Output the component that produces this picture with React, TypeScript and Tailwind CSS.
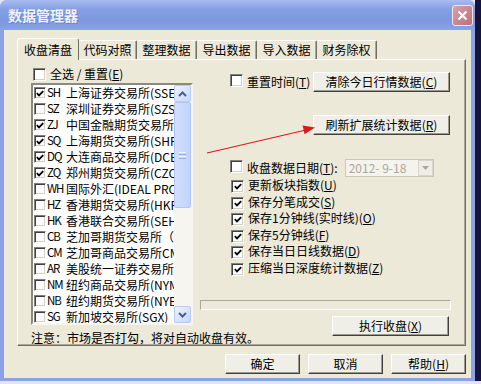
import React from 'react'

type BoxProps = { checked?: boolean; small?: boolean }

// classic sunken check box
function Box({ checked = false, small = false }: BoxProps) {
  return (
    <span
      className={
        (small ? 'w-[12px] h-[12px] ' : 'w-[13px] h-[13px] ') +
        'inline-flex shrink-0 items-center justify-center bg-white border border-t-[#808080] border-l-[#808080] border-b-white border-r-white shadow-[inset_1px_1px_0_#404040,inset_-1px_-1px_0_#d4d0c8]'
      }
    >
      {checked && (
        <svg width="8" height="7" viewBox="0 0 8 7">
          <path d="M0.8 3.2 L3 5.4 L7.2 1.2" fill="none" stroke="#000" strokeWidth="1.8" />
        </svg>
      )}
    </span>
  )
}

function Acc({ k }: { k: string }) {
  return (
    <>
      (<span className="underline">{k}</span>)
    </>
  )
}

function Btn({ children, className = '' }: { children: React.ReactNode; className?: string }) {
  return (
    <div
      className={
        'flex items-center justify-center bg-[#f0efe7] border border-t-white border-l-white border-r-[#404040] border-b-[#404040] shadow-[inset_-1px_-1px_0_#9d9a8c] text-[12px] leading-none text-black ' +
        className
      }
    >
      {children}
    </div>
  )
}

const markets: Array<[string, string, boolean]> = [
  ['SH', '上海证券交易所(SSE)', true],
  ['SZ', '深圳证券交易所(SZSE)', false],
  ['ZJ', '中国金融期货交易所(CFFEX)', true],
  ['SQ', '上海期货交易所(SHFE)', true],
  ['DQ', '大连商品交易所(DCE)', true],
  ['ZQ', '郑州期货交易所(CZCE)', true],
  ['WH', '国际外汇(IDEAL PRO)', false],
  ['HZ', '香港期货交易所(HKFE)', false],
  ['HK', '香港联合交易所(SEHK)', false],
  ['CB', '芝加哥期货交易所（CBOT)', false],
  ['CM', '芝加哥商品交易所CME', false],
  ['AR', '美股统一证券交易所', false],
  ['NM', '纽约商品交易所(NYMEX)', false],
  ['NB', '纽约期货交易所(NYBOT)', false],
  ['SG', '新加坡交易所(SGX)', false]
]

const options: Array<[string, string]> = [
  ['更新板块指数', 'U'],
  ['保存分笔成交', 'S'],
  ['保存1分钟线(实时线)', 'O'],
  ['保存5分钟线', 'F'],
  ['保存当日日线数据', 'D'],
  ['压缩当日深度统计数据', 'Z']
]

const tabs = ['代码对照', '整理数据', '导出数据', '导入数据', '财务除权']

function ScrollBtn({ up }: { up: boolean }) {
  return (
    <div className="h-[17px] w-[17px] flex items-center justify-center rounded-[2px] border border-[#b8cbf5] bg-[linear-gradient(135deg,#eef3fe,#c6d6fc)]">
      <svg width="9" height="6" viewBox="0 0 9 6">
        <path
          d={up ? 'M1 5 L4.5 1.5 L8 5' : 'M1 1 L4.5 4.5 L8 1'}
          fill="none"
          stroke="#4d6185"
          strokeWidth="2"
        />
      </svg>
    </div>
  )
}

export default function App() {
  return (
    <div className="relative w-[481px] h-[384px] overflow-hidden bg-[#e4e4ea] font-['Noto_Sans_CJK_SC',sans-serif] text-[12px] text-black">
      <div className="flex h-[381px]">
        {/* window */}
        <div className="w-[475px] flex flex-col rounded-t-[7px] bg-[#8ba3e6]">
          {/* title bar */}
          <div className="h-[30px] shrink-0 flex items-center pl-[8px] pr-[2px] rounded-t-[7px] bg-[linear-gradient(180deg,#a9bcf0_0%,#86a0e4_30%,#7d97e0_70%,#8aa3e6_100%)]">
            <span className="text-[14px] font-bold text-[#eef2fc] [text-shadow:1px_1px_0_#6a82c8]">
              数据管理器
            </span>
            <div className="ml-auto mt-[1px] w-[21px] h-[21px] rounded-[3px] border border-[#f2e6ea] bg-[linear-gradient(135deg,#d8a2aa,#b8707c)] flex items-center justify-center">
              <svg width="11" height="11" viewBox="0 0 11 11">
                <path d="M1.5 1.5 L9.5 9.5 M9.5 1.5 L1.5 9.5" stroke="#fff" strokeWidth="2.2" />
              </svg>
            </div>
          </div>

          {/* body */}
          <div className="flex-1 mx-[4px] mb-[3px] bg-[#ece9d8] pl-[13px] pt-[8px]">
            {/* tabs */}
            <div className="flex items-end h-[22px]">
              <div className="relative z-10 h-[22px] w-[62px] flex items-center pl-[6px] bg-[#ece9d8] border-t border-l border-r border-t-white border-l-white border-r-[#716f64] rounded-t-[3px]">
                收盘清盘
              </div>
              {tabs.map((t, i) => (
                <div
                  key={t}
                  className={
                    (i === 0 ? 'w-[58px] ' : 'w-[60px] ') +
                    'h-[19px] mb-[1px] flex items-center justify-center bg-[#ece9d8] border-t border-r border-t-white border-r-[#716f64] shadow-[inset_-1px_0_0_#aca899] rounded-t-[2px]'
                  }
                >
                  {t}
                </div>
              ))}
            </div>

            {/* tab panel */}
            <div className="relative z-0 -mt-[1px] w-[449px] h-[287px] flex border border-t-white border-l-white border-r-[#716f64] border-b-[#716f64] shadow-[inset_-1px_-1px_0_#aca899]">
              {/* left column */}
              <div className="w-[162px] ml-[13px] flex flex-col">
                <div className="mt-[7px] h-[14px] flex items-center pl-[2px]">
                  <Box />
                  <span className="ml-[4px] leading-none">
                    全选 / 重置<Acc k="E" />
                  </span>
                </div>
                <div className="mt-[2px] h-[242px] flex border-2 border-t-[#8c8a80] border-l-[#8c8a80] border-r-[#f6f5ef] border-b-[#f6f5ef] bg-white">
                  <div className="flex-1 overflow-hidden">
                    {markets.map(([code, name, on]) => (
                      <div key={code} className="h-[16px] flex items-center pl-[1px] whitespace-nowrap">
                        <Box checked={on} small />
                        <span className="w-[19px] shrink-0 ml-[1px] leading-none text-[11.5px] tracking-[-1px]">{code}</span>
                        <span className="shrink-0 leading-none">{name}</span>
                      </div>
                    ))}
                  </div>
                  <div className="w-[17px] shrink-0 flex flex-col bg-[#f6f5f0]">
                    <ScrollBtn up />
                    <div className="h-[106px] w-[17px] rounded-[2px] border border-[#b1c6f7] bg-[linear-gradient(90deg,#d3dffd,#c1d2fc)] flex flex-col items-center justify-center gap-[1px]">
                      <div className="w-[7px] h-[1px] bg-[#eef3fe]" />
                      <div className="w-[7px] h-[1px] bg-[#8cb0f8]" />
                      <div className="w-[7px] h-[1px] bg-[#eef3fe]" />
                      <div className="w-[7px] h-[1px] bg-[#8cb0f8]" />
                    </div>
                    <div className="flex-1" />
                    <ScrollBtn up={false} />
                  </div>
                </div>
                <div className="mt-[6px] h-[13px] leading-[13px] whitespace-nowrap">
                  注意：市场是否打勾，将对自动收盘有效。
                </div>
              </div>

              {/* right column */}
              <div className="w-[251px] ml-[7px] flex flex-col">
                <div className="mt-[12px] h-[20px] flex items-center">
                  <span className="ml-[30px]">
                    <Box />
                  </span>
                  <span className="ml-[4px] leading-none">
                    重置时间<Acc k="T" />
                  </span>
                  <Btn className="ml-auto mr-[1px] w-[137px] h-[20px]">
                    清除今日行情数据<Acc k="C" />
                  </Btn>
                </div>
                <div className="mt-[23px] h-[20px] flex">
                  <Btn className="ml-auto mr-[1px] w-[137px] h-[20px]">
                    刷新扩展统计数据<Acc k="R" />
                  </Btn>
                </div>
                <div className="mt-[24px] h-[18px] flex items-center">
                  <span className="ml-[30px]">
                    <Box />
                  </span>
                  <span className="ml-[4px] leading-none">
                    收盘数据日期<Acc k="T" />:
                  </span>
                  <div className="ml-[7px] w-[89px] h-[18px] flex items-center border border-[#c9c7ba] bg-[#f4f3ee]">
                    <span className="flex-1 pl-[3px] leading-none text-[#aca899]">2012- 9-18</span>
                    <div className="w-[15px] h-[16px] flex items-center justify-center bg-[#eeede6] border border-[#d8d6cc]">
                      <svg width="7" height="4" viewBox="0 0 7 4">
                        <path d="M0 0 L7 0 L3.5 4 Z" fill="#aca899" />
                      </svg>
                    </div>
                  </div>
                </div>
                <div className="flex flex-col">
                  {options.map(([label, k]) => (
                    <div key={k} className="h-[16.5px] flex items-center">
                      <span className="ml-[31px]">
                        <Box checked />
                      </span>
                      <span className="ml-[4px] leading-none">
                        {label}
                        <Acc k={k} />
                      </span>
                    </div>
                  ))}
                </div>
                <div className="mt-[24px] h-[10px] w-[251px] border border-t-[#aca899] border-l-[#aca899] border-r-white border-b-white" />
                <div className="mt-[6px] flex">
                  <Btn className="ml-[132px] w-[117px] h-[20px]">
                    执行收盘<Acc k="X" />
                  </Btn>
                </div>
              </div>
            </div>

            {/* dialog buttons */}
            <div className="mt-[8px] w-[449px] flex justify-end gap-[8px]">
              <Btn className="w-[75px] h-[20px]">确定</Btn>
              <Btn className="w-[75px] h-[20px]">取消</Btn>
              <Btn className="w-[75px] h-[20px]">
                帮助<Acc k="H" />
              </Btn>
            </div>
          </div>
        </div>
        <div className="flex-1 bg-[#14143a]" />
      </div>

      {/* red annotation arrow */}
      <svg className="absolute left-0 top-0 pointer-events-none" width="481" height="384">
        <line x1="207" y1="153" x2="306" y2="130" stroke="#e01818" strokeWidth="1.2" />
        <polygon points="315,127.5 304.6,134.2 302.6,125.6" fill="#e01818" />
      </svg>
    </div>
  )
}
